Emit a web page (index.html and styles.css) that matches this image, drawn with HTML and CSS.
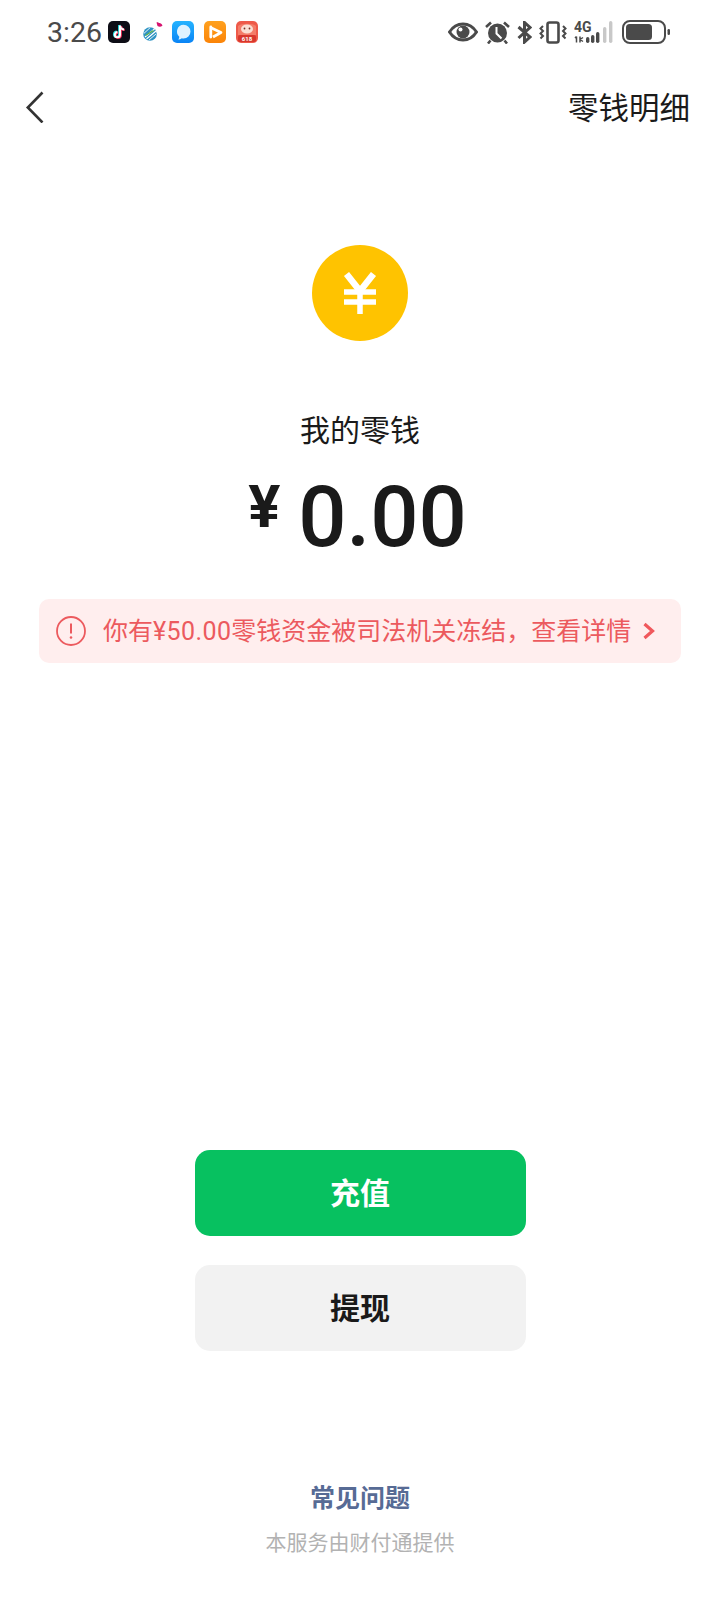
FILE: index.html
```html
<!DOCTYPE html>
<html lang="zh-CN">
<head>
  <meta charset="UTF-8" />
  <title>我的零钱</title>
  <meta name="viewport" content="width=device-width, initial-scale=1" />
  <link rel="stylesheet" href="styles.css">
</head>
<body>
  <!-- Status bar -->
  <div class="status-bar">
    <div class="status-left">
      <span class="time">3:26</span>
      <svg class="app-icon" viewBox="0 0 22 22">
        <rect width="22" height="22" rx="5" fill="#0d0d16"/>
        <path d="M12 4.500v9.200a2.600 2.600 0 1 1-2.600-2.600M12 4.500c.3 2.400 1.800 3.800 4 4" fill="none" stroke="#25e0e6" stroke-width="2.200" transform="translate(-.8 -.5)"/>
        <path d="M12 4.500v9.200a2.600 2.600 0 1 1-2.600-2.600M12 4.500c.3 2.400 1.800 3.800 4 4" fill="none" stroke="#f5305c" stroke-width="2.200" transform="translate(.8 .5)"/>
        <path d="M12 4.500v9.200a2.600 2.600 0 1 1-2.600-2.600M12 4.500c.3 2.400 1.800 3.800 4 4" fill="none" stroke="#fff" stroke-width="2"/>
      </svg>
      <svg class="app-icon mobile-icon" viewBox="0 0 22 22">
        <circle cx="8" cy="13" r="6.800" fill="#2d93c4"/>
        <path d="M3 16l9.500-8M4.500 18l9.500-8" fill="none" stroke="#fff" stroke-width="1.200"/>
        <path d="M1.800 12.500l6.500-6M7 19l7-6" fill="none" stroke="#e8f4f8" stroke-width="1"/>
        <path d="M3.500 14.500l8-5" fill="none" stroke="#58ad4a" stroke-width="1.300"/>
        <path d="M14.500 1.500c1.500-1 2 .3 3 .5s2.500 1 3 2.500c-1.500 1.500-3.500 1.500-5 .5z" fill="#d6136f"/>
      </svg>
      <svg class="app-icon" viewBox="0 0 22 22">
        <defs><linearGradient id="blueTile" x1="0" y1="0" x2="0" y2="1"><stop offset="0" stop-color="#25b3ff"/><stop offset="1" stop-color="#0a84f5"/></linearGradient></defs>
        <rect width="22" height="22" rx="5" fill="url(#blueTile)"/>
        <path d="M11.500 3.800a7 6.800 0 0 1 0 13.600c-.6 0-1.200-.1-1.700-.2-1 .9-2.200 1.300-3.500 1.300.6-.8 1-1.800 1-2.800a6.800 6.800 0 0 1 4.200-11.900z" fill="#dff2ff"/>
      </svg>
      <svg class="app-icon" viewBox="0 0 22 22">
        <defs><linearGradient id="orangeTile" x1="0" y1="0" x2="0" y2="1"><stop offset="0" stop-color="#ffa11f"/><stop offset="1" stop-color="#fb8408"/></linearGradient></defs>
        <rect width="22" height="22" rx="5" fill="url(#orangeTile)"/>
        <path d="M6.800 6v10" stroke="#fff" stroke-width="2.800" stroke-linecap="round"/>
        <path d="M7 6.800l10 4.700-8 4.500" fill="none" stroke="#fff" stroke-width="2.800" stroke-linejoin="round"/>
      </svg>
      <svg class="app-icon" viewBox="0 0 22 22">
        <rect width="22" height="22" rx="5" fill="#ee5a49"/>
        <path d="M2 5c3-3 15-3 18 0v9H2z" fill="#f47c68"/>
        <ellipse cx="11" cy="8" rx="6" ry="4.600" fill="#fbe0d4"/>
        <circle cx="8.500" cy="7.500" r=".9" fill="#7a3327"/>
        <circle cx="13.500" cy="7.500" r=".9" fill="#7a3327"/>
        <rect x="2" y="14" width="18" height="7" rx="2" fill="#d8382e"/>
        <text x="11" y="20" class="tile-text" text-anchor="middle">618</text>
      </svg>
    </div>
    <div class="status-right">
      <svg class="sys-icon" width="30" height="20" viewBox="0 0 30 20">
        <path d="M1.500 10C5 4.500 9.500 2 15 2s10 2.500 13.500 8C25 15.500 20.500 18 15 18S5 15.500 1.500 10z" fill="none" stroke="currentColor" stroke-width="3"/>
        <circle cx="15" cy="10" r="6.500" fill="currentColor"/>
        <circle cx="12.500" cy="7.500" r="2" fill="#fff"/>
      </svg>
      <svg class="sys-icon" width="25" height="23" viewBox="0 0 25 23">
        <circle cx="12.500" cy="12" r="9.500" fill="currentColor"/>
        <path d="M11.500 6v6.500l5 5" fill="none" stroke="#fff" stroke-width="2"/>
        <path d="M1 6L6 1.500M24 6L19 1.500M5.500 19.500L3 22.500M19.500 19.500L22 22.500" stroke="currentColor" stroke-width="2.600"/>
      </svg>
      <svg class="sys-icon" width="15" height="23" viewBox="0 0 15 23">
        <path d="M1.500 6l11.500 10-5.500 5V1.500L13 6.500 1.500 17" fill="none" stroke="currentColor" stroke-width="3"/>
      </svg>
      <svg class="sys-icon" width="28" height="23" viewBox="0 0 28 23">
        <rect x="8.500" y="1.500" width="11" height="20" rx="2" fill="none" stroke="currentColor" stroke-width="2.600"/>
        <path d="M4 5L1.500 7.500 4 10 1.500 12.500 4 15l-2.500 2.500M24 5l2.500 2.500L24 10l2.500 2.500L24 15l2.500 2.500" fill="none" stroke="currentColor" stroke-width="2"/>
      </svg>
      <svg class="sys-icon" width="39" height="28" viewBox="0 0 39 28">
        <text x="0" y="13.500" class="net-text">4G</text>
        <path d="M2.500 18.500v6M1 20l1.500-1.500M6 18.500v6M6 21.500l3-2M6 21.500l3 2" fill="none" stroke="currentColor" stroke-width="1.500"/>
        <rect x="12" y="19" width="3.400" height="6" rx="1.700" fill="currentColor"/>
        <rect x="17" y="17" width="3.400" height="8" rx="1.700" fill="currentColor"/>
        <rect x="22" y="14" width="3.400" height="11" rx="1.700" fill="currentColor"/>
        <rect x="29" y="9" width="3.400" height="16" rx="1.700" fill="#c8c8c8"/>
        <rect x="35" y="3" width="3.400" height="22" rx="1.700" fill="#c8c8c8"/>
      </svg>
      <svg class="sys-icon battery" width="48" height="24" viewBox="0 0 48 24">
        <rect x="1" y="1" width="42" height="22" rx="7" fill="none" stroke="currentColor" stroke-width="2"/>
        <rect x="4" y="4" width="26" height="16" rx="3.500" fill="currentColor"/>
        <rect x="45.500" y="9" width="2.500" height="6" rx="1.200" fill="currentColor"/>
      </svg>
    </div>
  </div>

  <!-- Nav bar -->
  <div class="nav-bar">
    <svg class="back-icon" width="20" height="32" viewBox="0 0 20 32">
      <path d="M17.500 1.500L2.800 16.500l14.700 15" fill="none" stroke="#333" stroke-width="2.600"/>
    </svg>
    <span class="nav-link">零钱明细</span>
  </div>

  <div class="main">
    <div class="coin">
      <svg width="34" height="42" viewBox="0 0 34 42">
        <path d="M3.500 2L17 19 30.500 2" fill="none" stroke="#fff" stroke-width="6.500"/>
        <path d="M17 17v25M1 20h32M1 30h32" fill="none" stroke="#fff" stroke-width="5.500"/>
      </svg>
    </div>
    <div class="balance-label">我的零钱</div>
    <div class="balance">
      <span class="currency">¥</span>
      <span class="amount">0.00</span>
    </div>

    <div class="notice">
      <svg class="notice-icon" width="30" height="30" viewBox="0 0 30 30">
        <circle cx="15" cy="15" r="14" fill="none" stroke="#ec5a5e" stroke-width="1.800"/>
        <path d="M15 7.500v10" stroke="#ec5a5e" stroke-width="2"/>
        <circle cx="15" cy="21.500" r="1.300" fill="#ec5a5e"/>
      </svg>
      <span class="notice-text">你有<span class="notice-sum">¥50.00</span>零钱资金被司法机关冻结，查看详情</span>
      <svg class="notice-arrow" width="14" height="18" viewBox="0 0 14 18">
        <path d="M2.500 2L10.500 9l-8 7" fill="none" stroke="#f0585c" stroke-width="3.200"/>
      </svg>
    </div>

    <button class="btn btn-primary">充值</button>
    <button class="btn btn-default">提现</button>

    <div class="faq">常见问题</div>
    <div class="provider">本服务由财付通提供</div>
  </div>
</body>
</html>
```

FILE: styles.css
```css
body {
  margin: 0;
  background: #fff;
  font-family: "Roboto", "Noto Sans CJK SC", sans-serif;
  color: #1a1a1a;
}
.status-bar {
  height: 64px;
  padding: 0 50px 0 47px;
  display: flex;
  justify-content: space-between;
  align-items: center;
  color: #4a4a4a;
}
.status-left {
  display: flex;
  align-items: center;
}
.time {
  font-size: 28.500px;
  width: 61px;
}
.app-icon {
  width: 22px;
  height: 22px;
  margin-right: 10px;
}
.mobile-icon {
  margin-left: 2px;
  margin-right: 8px;
}
.tile-text {
  font-size: 6px;
  font-weight: 700;
  fill: #fff;
}
.status-right {
  display: flex;
  align-items: center;
  gap: 7px;
}
.sys-icon {
  display: block;
}
.net-text {
  font-size: 14px;
  font-weight: 700;
  fill: currentColor;
}
.battery {
  margin-left: 2px;
}
.nav-bar {
  height: 84px;
  padding: 0 30px 0 25px;
  display: flex;
  justify-content: space-between;
  align-items: center;
}
.back-icon {
  margin-top: 2px;
}
.nav-link {
  font-size: 30.500px;
}
.main {
  display: flex;
  flex-direction: column;
  align-items: center;
}
.coin {
  width: 96px;
  height: 96px;
  margin: 97px 1px 0 0;
  border-radius: 50%;
  background: #ffc300;
  display: flex;
  justify-content: center;
  align-items: center;
}
.balance-label {
  margin-top: 70px;
  font-size: 30px;
  line-height: 40px;
}
.balance {
  margin: 18px 5px 0 0;
  height: 90px;
  display: flex;
  align-items: center;
  gap: 18px;
}
.currency {
  font-size: 60px;
  font-weight: 700;
  line-height: 60px;
  margin-bottom: 14px;
}
.amount {
  font-size: 85px;
  font-weight: 500;
  line-height: 90px;
  margin-top: 6px;
}
.notice {
  margin-top: 40px;
  width: 642px;
  height: 64px;
  box-sizing: border-box;
  padding: 0 25px 0 17px;
  background: #ffeeee;
  border-radius: 10px;
  display: flex;
  align-items: center;
}
.notice-text {
  margin: 0 0 4px 17px;
  flex: 1;
  font-size: 25px;
  color: #ec5a5e;
  white-space: nowrap;
}
.notice-sum {
  letter-spacing: 0.4px;
}
.btn {
  display: block;
  width: 331px;
  height: 86px;
  padding: 0 0 4px;
  border: none;
  border-radius: 15px;
  font-family: inherit;
  font-size: 30px;
  font-weight: 700;
}
.btn-primary {
  margin-top: 487px;
  background: #07c160;
  color: #fff;
}
.btn-default {
  margin-top: 29px;
  background: #f2f2f2;
  color: #1a1a1a;
}
.faq {
  margin-top: 130px;
  font-size: 25px;
  line-height: 36px;
  font-weight: 700;
  color: #576b95;
}
.provider {
  margin-top: 10px;
  font-size: 21px;
  line-height: 32px;
  color: #b2b2b2;
}
```
